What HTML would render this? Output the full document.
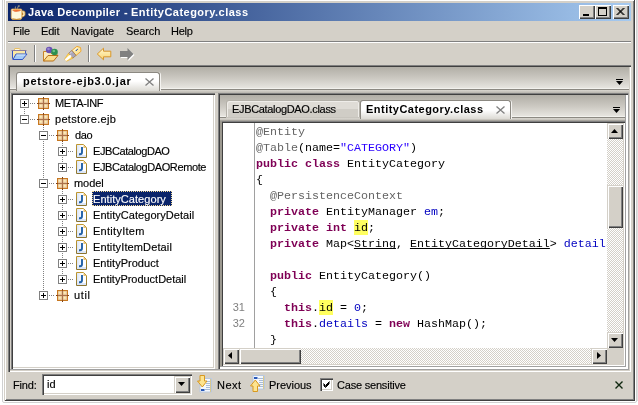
<!DOCTYPE html>
<html><head><meta charset="utf-8"><title>Java Decompiler - EntityCategory.class</title>
<style>
html,body{margin:0;padding:0}
body{width:638px;height:405px;background:#fff;overflow:hidden;position:relative;font:11px/13px 'Liberation Sans',sans-serif;color:#000}
div,svg,i,span{box-sizing:border-box}
.a{position:absolute}
.t{position:absolute;white-space:pre;will-change:transform;-webkit-text-stroke:0.15px;font:11px/13px 'Liberation Sans',sans-serif}
#win{position:absolute;left:4px;top:-1px;width:631px;height:402px;background:#d4d0c8;
 box-shadow:inset 1px 1px 0 #d4d0c8,inset -1px -1px 0 #404040,inset 2px 2px 0 #fff,inset -2px -2px 0 #808080}
#title{position:absolute;left:8px;top:3px;width:623px;height:18px;background:linear-gradient(to right,#0a246a 0%,#a6caf0 100%)}
.tb{position:absolute;top:5px;width:16px;height:14px;background:#d4d0c8;
 box-shadow:inset 1px 1px 0 #fff,inset -1px -1px 0 #404040,inset -2px -2px 0 #808080}
.sunk{box-shadow:inset 1px 1px 0 #808080,inset 2px 2px 0 #404040,inset -1px -1px 0 #fff,inset -2px -2px 0 #d4d0c8}
.pnl{box-shadow:inset 1px 1px 0 #808080,inset 2px 2px 0 #404040,inset -1px -1px 0 #fff,inset -2px -2px 0 #d4d0c8,inset -3px -3px 0 #a0a0a0}
.rpn{box-shadow:inset 1px 1px 0 #808080,inset 2px 2px 0 #404040,inset -1px -1px 0 #fff,inset -2px -2px 0 #fff,inset -3px -3px 0 #a0a0a0}
.sb{box-shadow:inset 1px 1px 0 #d4d0c8,inset 2px 2px 0 #fff,inset -1px -1px 0 #404040,inset -2px -2px 0 #808080 !important}
.eds{box-shadow:inset 0 1px 0 #a8a59e,inset 2px 0 0 #9c9990,inset 0 2px 0 #808080,inset 3px 3px 0 #404040,inset -1px -1px 0 #fff,inset -2px -2px 0 #d4d0c8}
.btn{position:absolute;background:#d4d0c8;box-shadow:inset 1px 1px 0 #fff,inset -1px -1px 0 #404040,inset -2px -2px 0 #808080}
.chk{background-color:#fff;background-image:linear-gradient(45deg,#d4d0c8 25%,transparent 25%,transparent 75%,#d4d0c8 75%),linear-gradient(45deg,#d4d0c8 25%,transparent 25%,transparent 75%,#d4d0c8 75%);background-size:2px 2px;background-position:0 0,1px 1px}
/* tree */
.bx{position:absolute;width:9px;height:9px;border:1px solid #808080;background:#fff}
.bx .h{position:absolute;left:1px;top:3px;width:5px;height:1px;background:#000}
.bx .v{position:absolute;left:3px;top:1px;width:1px;height:5px;background:#000}
.hd{position:absolute;height:1px;background:repeating-linear-gradient(to right,#808080 0,#808080 1px,transparent 1px,transparent 2px)}
.vd{position:absolute;width:1px;background:repeating-linear-gradient(to bottom,#808080 0,#808080 1px,transparent 1px,transparent 2px)}
.ic{position:absolute}
.sel{position:absolute;background:#0a246a;outline:1px dotted #f5db95;outline-offset:-1px}
/* code */
#ed{position:absolute;left:223px;top:123px;width:384px;height:225px;background:#fff;overflow:hidden}
.cl{will-change:transform;position:absolute;left:33px;white-space:pre;font:11.67px/16px 'Liberation Mono',monospace;color:#000}
.ln{will-change:transform;position:absolute;left:0;width:22px;text-align:right;font:11px/13px 'Liberation Sans',sans-serif;color:#808080}
.kw{color:#7f0055;font-weight:bold}
.an{color:#646464}
.st{color:#2a00ff}
.fd{color:#0000c0}
.nm{color:#0000c0}
.lk{text-decoration:underline;text-underline-offset:1px;text-decoration-thickness:1px;text-decoration-skip-ink:none}
.hl{background:#ffff60;padding:1px 0 0 0}
</style></head>
<body>
<svg width="0" height="0" style="position:absolute">
<defs>
<radialGradient id="pg" cx="0.4" cy="0.4" r="0.7"><stop offset="0" stop-color="#fff4b8"/><stop offset="1" stop-color="#ecc8a0"/></radialGradient>
<g id="pkg">
 <rect x="1.5" y="1.5" width="10" height="10" fill="#dcb088" stroke="#c87820"/>
 <rect x="2.300" y="2.300" width="3.400" height="3.400" fill="url(#pg)"/><rect x="7.300" y="2.300" width="3.400" height="3.400" fill="url(#pg)"/>
 <rect x="2.300" y="7.300" width="3.400" height="3.400" fill="url(#pg)"/><rect x="7.300" y="7.300" width="3.400" height="3.400" fill="url(#pg)"/>
 <path d="M6.500 1v11M1 6.500h11" stroke="#8a4a20" stroke-width="1" opacity="0.600"/><path d="M6.500 0v1.500M6.500 11.500v1.500M0 6.500h1.500M11.500 6.500h1.500" stroke="#7a4018" stroke-width="1"/>
</g>
<linearGradient id="cg" x1="0" y1="0" x2="1" y2="0"><stop offset="0" stop-color="#d8e4f8"/><stop offset="0.600" stop-color="#fff"/></linearGradient>
<linearGradient id="cb" x1="0" y1="0" x2="0" y2="1"><stop offset="0" stop-color="#c09830"/><stop offset="1" stop-color="#8a7430"/></linearGradient>
<g id="cls">
 <path d="M0.500 0.500h7l3 3v10h-10z" fill="url(#cg)" stroke="url(#cb)"/>
 <path d="M1 11h9v2h-9z" fill="#dce6f8"/>
 <path d="M7.500 1v3h3z" fill="#e8c070"/>
 <path d="M6 3v5.300q0 2-2 2h-1" fill="none" stroke="#2060a8" stroke-width="1.900"/>
</g>
</defs>
</svg>
<div class="a" style="left:2px;top:-3px;width:635px;height:406px;border:1px solid #d0d0d0;border-radius:2px"></div>
<div class="a" style="left:637px;top:0;width:1px;height:401px;background:#e2e2e2"></div>
<div id="win"></div>
<div id="title"></div>
<!-- title buttons -->
<div class="tb" style="left:579px"><div class="a" style="left:4px;top:9px;width:6px;height:2px;background:#000"></div></div>
<div class="tb" style="left:595px"><div class="a" style="left:3px;top:2px;width:9px;height:9px;border:1px solid #000;border-top-width:2px"></div></div>
<div class="tb" style="left:613px"><svg class="a" style="left:3px;top:3px" width="9" height="7" viewBox="0 0 9 7"><path d="M0.5 0L7.500 7M1.500 0L8.500 7M7.500 0L0.500 7M8.500 0L1.500 7" stroke="#000" stroke-width="1"/></svg></div>

<!-- title icon -->
<svg class="a" style="left:10px;top:4px" width="16" height="16" viewBox="0 0 16 16">
 <path d="M5.500 4.800q-0.600-1.300 0.300-2.300M7.300 4.800q0.200-1.800 2.200-3.500M7.800 1.800l1.800 0.800" stroke="#8c8c84" stroke-width="1.100" fill="none"/>
 <path d="M11.500 7h2q1.500 0 1.500 1.500v2q0 1.500-1.500 2l-2 0.500z" fill="#fff0c8" stroke="#d09838" stroke-width="0.900"/>
 <path d="M12 8.500h1.200v2.500l-1.200 0.400z" fill="#b87820"/>
 <path d="M1.200 6q0-1 1-1h8.600q1 0 1 1v7.500q0 2-2 2h-6.600q-2 0-2-2z" fill="#fff8dc" stroke="#e0a850" stroke-width="0.800"/>
 <path d="M2.300 6q4.500-1.500 9 0q-1 1.800-4.700 1.800t-4.300-1.800z" fill="#ee6a30"/>
 <path d="M3 6q4-1 7.500 0" stroke="#f8b850" stroke-width="0.800" fill="none"/>
 <path d="M2.500 14.800q4 1.200 8 0" stroke="#c88828" stroke-width="1" fill="none"/>
</svg>
<!-- toolbar: open -->
<svg class="a" style="left:11px;top:47px" width="17" height="14" viewBox="0 0 17 14">
 <path d="M3.500 3.500v-1.500q0-0.500 0.500-0.500h4.500q0.500 0 0.500 0.500v1.500" fill="#fff8e0" stroke="#e8c068" stroke-width="1"/>
 <path d="M1 3.500h13.500v4h-13.500z" fill="#fbe28e"/>
 <path d="M1.500 4v8h2l2-5h8.500v-3" fill="#fde9a4"/>
 <path d="M0.500 3.500h15" stroke="#8c7c9c" stroke-width="1"/>
 <path d="M1.500 4v7.500q0 1 1 1h9" fill="none" stroke="#3454c4" stroke-width="1"/>
 <path d="M14.500 4v2.500" stroke="#4060c0" stroke-width="1"/>
 <path d="M5 7h11l-4.500 5.500h-9.500z" fill="#a6ccf6" stroke="#3454c4" stroke-width="1"/>
 <path d="M5.500 8h9" stroke="#d4e8fc" stroke-width="1"/>
</svg>
<!-- toolbar: open type -->
<svg class="a" style="left:43px;top:46px" width="16" height="16" viewBox="0 0 16 16">
 <path d="M0.500 5.500v9.500h1l4-5.500h8.500v-2h-6l-1.500-2z" fill="#fcecc0" stroke="#c88428" stroke-width="1"/>
 <path d="M5 9.500h10l-4.500 5.500h-10z" fill="#fbdc8c" stroke="#b87018" stroke-width="1"/>
 <circle cx="6.200" cy="4" r="3.300" fill="#6a52b4"/>
 <circle cx="5.500" cy="3" r="1.300" fill="#9a88d0"/>
 <circle cx="11.500" cy="6" r="3.300" fill="#2c9050"/>
 <circle cx="10.800" cy="5" r="1.300" fill="#6cc088"/>
</svg>
<!-- toolbar: highlighter -->
<svg class="a" style="left:64px;top:46px" width="18" height="16" viewBox="0 0 18 16">
 <path d="M7.920 4.500L12.020 9.420L17.030 5.260L16.500 1.500L12.930 0.340z" fill="#fbe6a0" stroke="#f0a428" stroke-width="0.900" stroke-linejoin="round"/>
 <path d="M9.500 5L13.500 1.800" stroke="#fff6d0" stroke-width="1.400"/>
 <circle cx="12.300" cy="4.400" r="0.650" fill="#2048b0"/><circle cx="13.300" cy="3.300" r="0.650" fill="#2048b0"/>
 <path d="M4.450 7.380L8.550 12.300L12.020 9.420L7.920 4.500z" fill="#aaa6ba" stroke="#9a7a50" stroke-width="0.800" stroke-linejoin="round"/>
 <path d="M5.800 7.500L8 5.800" stroke="#c8c4d4" stroke-width="1.200"/>
 <path d="M0.730 13.080L2.460 15.160L8.550 12.300L4.450 7.380z" fill="#fde070" stroke="#f0b030" stroke-width="0.800" stroke-linejoin="round"/>
 <path d="M2.200 13.600L6.200 10.300" stroke="#fff" stroke-width="2.400" stroke-linecap="round"/>
</svg>
<!-- toolbar: back -->
<svg class="a" style="left:96px;top:47px" width="16" height="14" viewBox="0 0 16 14">
 <defs><linearGradient id="ag" x1="0" y1="0" x2="0" y2="1"><stop offset="0" stop-color="#fff6d0"/><stop offset="0.500" stop-color="#fde7a0"/><stop offset="1" stop-color="#f8d070"/></linearGradient></defs>
 <path d="M1.300 7l6.200-5.800v3h7.300v5.600h-7.300v3z" fill="url(#ag)" stroke="#d8962a" stroke-width="1" stroke-linejoin="round"/>
</svg>
<!-- toolbar: forward (disabled) -->
<svg class="a" style="left:119px;top:47px" width="17" height="15" viewBox="0 0 17 15">
 <path d="M15.500 8l-6-6v3h-7.500v6h7.500v3z" fill="#fff"/>
 <path d="M14.500 7l-6-6v3h-7.500v6h7.500v3z" fill="#808080"/>
</svg>
<!-- find next icon -->
<svg class="a" style="left:197px;top:375px" width="16" height="18" viewBox="0 0 16 18">
 <path d="M3 3.500h11.500v13.500h-11.500z" fill="#f4f8fe" stroke="#b8c8e0" stroke-width="1"/>
 <path d="M13.500 4v13" stroke="#d8c890" stroke-width="1"/>
 <path d="M9 6.500h4M9 8.500h4M9 10.500h4M9 12.500h4M8 14.500h5" stroke="#a8bcd8" stroke-width="1"/>
 <rect x="4" y="14" width="3.500" height="2" fill="#2858b8"/>
 <path d="M3 0.500h4.500v5.500h2.500l-4.700 6-4.800-6h2.500z" fill="#fde490" stroke="#d89820" stroke-width="1" stroke-linejoin="round"/>
</svg>
<!-- find prev icon -->
<svg class="a" style="left:250px;top:375px" width="16" height="18" viewBox="0 0 16 18">
 <path d="M3 0.500h11.500v13.500h-11.500z" fill="#f4f8fe" stroke="#b8c8e0" stroke-width="1"/>
 <path d="M13.500 1v13" stroke="#d8c890" stroke-width="1"/>
 <path d="M8 3.500h5M9 5.500h4M9 7.500h4M9 9.500h4M9 11.500h4" stroke="#a8bcd8" stroke-width="1"/>
 <rect x="4" y="2" width="3.500" height="2" fill="#2858b8"/>
 <path d="M3 16.500h4.500v-5.500h2.500l-4.700-6-4.800 6h2.500z" fill="#fde490" stroke="#d89820" stroke-width="1" stroke-linejoin="round"/>
</svg>
<!-- menu sep -->
<div class="a" style="left:8px;top:41px;width:623px;height:1px;background:#808080"></div>
<div class="a" style="left:8px;top:42px;width:623px;height:1px;background:#fff"></div>
<!-- toolbar sep -->
<div class="a" style="left:34px;top:45px;width:1px;height:17px;background:#808080"></div>
<div class="a" style="left:35px;top:45px;width:1px;height:17px;background:#fff"></div>
<div class="a" style="left:88px;top:45px;width:1px;height:17px;background:#808080"></div>
<div class="a" style="left:89px;top:45px;width:1px;height:17px;background:#fff"></div>

<!-- outer panel -->
<div class="a pnl" style="left:8px;top:65px;width:623px;height:307px;background:#d4d0c8"></div>
<div class="a" style="left:10px;top:67px;width:619px;height:22px;background:linear-gradient(to bottom,#b1aea6 0%,#cbc8c1 50%,#e9e7e2 100%)"></div>
<div class="a" style="left:10px;top:88px;width:619px;height:1px;background:#f2f1ed"></div>
<div class="a" style="left:10px;top:89px;width:619px;height:1px;background:#8c8982"></div>
<div class="a" style="left:10px;top:90px;width:619px;height:3px;background:linear-gradient(to bottom,#dad7d0,#b8b5ae)"></div>
<!-- outer tab -->
<div class="a" style="left:16px;top:72px;width:144px;height:19px;border:1px solid #8c8982;border-bottom:none;border-radius:3px 3px 0 0;background:linear-gradient(to bottom,#fff 0%,#fff 45%,#dcdad4 100%);box-shadow:1px 0 0 #f4f3f0"></div>
<svg class="a" style="left:145px;top:78px" width="9" height="8" viewBox="0 0 9 8"><path d="M0.5 0.500L8.500 7.500M8.500 0.500L0.500 7.500" stroke="#808080" stroke-width="1.300"/></svg>
<!-- outer dropdown -->
<div class="a" style="left:616px;top:79px;width:7px;height:1px;background:#000"></div>
<svg class="a" style="left:616px;top:81px" width="7" height="4" viewBox="0 0 7 4"><path d="M0 0h7L3.500 4z" fill="#000"/></svg>

<!-- left tree -->
<div class="a sunk" style="left:11px;top:93px;width:204px;height:276px;background:#fff"></div>
<div class="bx" style="left:20px;top:99px"><i class="h"></i><i class="v"></i></div>
<div class="hd" style="left:30px;top:103px;width:5px"></div>
<svg class="ic" style="left:37px;top:97px" width="13" height="13" viewBox="0 0 13 13"><use href="#pkg"/></svg>
<div class="bx" style="left:20px;top:115px"><i class="h"></i></div>
<div class="hd" style="left:30px;top:119px;width:5px"></div>
<svg class="ic" style="left:37px;top:113px" width="13" height="13" viewBox="0 0 13 13"><use href="#pkg"/></svg>
<div class="bx" style="left:39px;top:131px"><i class="h"></i></div>
<div class="hd" style="left:49px;top:135px;width:5px"></div>
<svg class="ic" style="left:56px;top:129px" width="13" height="13" viewBox="0 0 13 13"><use href="#pkg"/></svg>
<div class="bx" style="left:58px;top:147px"><i class="h"></i><i class="v"></i></div>
<div class="hd" style="left:68px;top:151px;width:5px"></div>
<svg class="ic" style="left:76px;top:144px" width="11" height="14" viewBox="0 0 11 14"><use href="#cls"/></svg>
<div class="bx" style="left:58px;top:163px"><i class="h"></i><i class="v"></i></div>
<div class="hd" style="left:68px;top:167px;width:5px"></div>
<svg class="ic" style="left:76px;top:160px" width="11" height="14" viewBox="0 0 11 14"><use href="#cls"/></svg>
<div class="bx" style="left:39px;top:179px"><i class="h"></i></div>
<div class="hd" style="left:49px;top:183px;width:5px"></div>
<svg class="ic" style="left:56px;top:177px" width="13" height="13" viewBox="0 0 13 13"><use href="#pkg"/></svg>
<div class="bx" style="left:58px;top:195px"><i class="h"></i><i class="v"></i></div>
<div class="hd" style="left:68px;top:199px;width:5px"></div>
<svg class="ic" style="left:76px;top:192px" width="11" height="14" viewBox="0 0 11 14"><use href="#cls"/></svg>
<div class="sel" style="left:92px;top:191px;width:80px;height:15px"></div>
<div class="bx" style="left:58px;top:211px"><i class="h"></i><i class="v"></i></div>
<div class="hd" style="left:68px;top:215px;width:5px"></div>
<svg class="ic" style="left:76px;top:208px" width="11" height="14" viewBox="0 0 11 14"><use href="#cls"/></svg>
<div class="bx" style="left:58px;top:227px"><i class="h"></i><i class="v"></i></div>
<div class="hd" style="left:68px;top:231px;width:5px"></div>
<svg class="ic" style="left:76px;top:224px" width="11" height="14" viewBox="0 0 11 14"><use href="#cls"/></svg>
<div class="bx" style="left:58px;top:243px"><i class="h"></i><i class="v"></i></div>
<div class="hd" style="left:68px;top:247px;width:5px"></div>
<svg class="ic" style="left:76px;top:240px" width="11" height="14" viewBox="0 0 11 14"><use href="#cls"/></svg>
<div class="bx" style="left:58px;top:259px"><i class="h"></i><i class="v"></i></div>
<div class="hd" style="left:68px;top:263px;width:5px"></div>
<svg class="ic" style="left:76px;top:256px" width="11" height="14" viewBox="0 0 11 14"><use href="#cls"/></svg>
<div class="bx" style="left:58px;top:275px"><i class="h"></i><i class="v"></i></div>
<div class="hd" style="left:68px;top:279px;width:5px"></div>
<svg class="ic" style="left:76px;top:272px" width="11" height="14" viewBox="0 0 11 14"><use href="#cls"/></svg>
<div class="bx" style="left:39px;top:291px"><i class="h"></i><i class="v"></i></div>
<div class="hd" style="left:49px;top:295px;width:5px"></div>
<svg class="ic" style="left:56px;top:289px" width="13" height="13" viewBox="0 0 13 13"><use href="#pkg"/></svg>
<div class="vd" style="left:24px;top:109px;height:6px"></div>
<div class="vd" style="left:43px;top:127px;height:4px"></div>
<div class="vd" style="left:43px;top:141px;height:38px"></div>
<div class="vd" style="left:43px;top:189px;height:102px"></div>
<div class="vd" style="left:62px;top:143px;height:4px"></div>
<div class="vd" style="left:62px;top:157px;height:6px"></div>
<div class="vd" style="left:62px;top:191px;height:4px"></div>
<div class="vd" style="left:62px;top:205px;height:6px"></div>
<div class="vd" style="left:62px;top:221px;height:6px"></div>
<div class="vd" style="left:62px;top:237px;height:6px"></div>
<div class="vd" style="left:62px;top:253px;height:6px"></div>
<div class="vd" style="left:62px;top:269px;height:6px"></div>

<!-- right panel -->
<div class="a rpn" style="left:218px;top:93px;width:410px;height:276px;background:#d4d0c8"></div>
<div class="a" style="left:220px;top:95px;width:405px;height:22px;background:linear-gradient(to bottom,#b1aea6 0%,#cbc8c1 50%,#e9e7e2 100%)"></div>
<div class="a" style="left:220px;top:117px;width:405px;height:1px;background:#8c8982"></div>
<div class="a" style="left:220px;top:118px;width:405px;height:3px;background:linear-gradient(to bottom,#dad7d0,#b8b5ae)"></div>
<!-- inactive tab -->
<div class="a" style="left:220px;top:116px;width:405px;height:1px;background:#f2f1ed"></div>
<div class="a" style="left:226px;top:100px;width:134px;height:17px;border:1px solid #b4b1a9;border-bottom:none;border-radius:3px 3px 0 0;background:linear-gradient(to bottom,#dfdcd6 0%,#dfdcd6 47%,#d0cdc6 47%,#d0cdc6 100%);box-shadow:inset 1px 1px 0 #efede9,inset -1px 0 0 #efede9"></div>
<div class="a" style="left:226px;top:117px;width:134px;height:1px;background:#c8c5be"></div>
<!-- active tab -->
<div class="a" style="left:360px;top:100px;width:151px;height:19px;border:1px solid #8c8982;border-bottom:none;border-radius:3px 3px 0 0;background:linear-gradient(to bottom,#fff 0%,#fff 50%,#dcdad4 100%);box-shadow:1px 0 0 #f4f3f0"></div>
<svg class="a" style="left:496px;top:106px" width="9" height="8" viewBox="0 0 9 8"><path d="M0.5 0.500L8.500 7.500M8.500 0.500L0.500 7.500" stroke="#808080" stroke-width="1.300"/></svg>
<div class="a" style="left:613px;top:107px;width:7px;height:1px;background:#000"></div>
<svg class="a" style="left:613px;top:109px" width="7" height="4" viewBox="0 0 7 4"><path d="M0 0h7L3.500 4z" fill="#000"/></svg>
<!-- editor -->
<div class="a eds" style="left:220px;top:120px;width:405px;height:246px;background:#fff"></div>
<div id="ed">
<div class="a" style="left:31px;top:0;width:1px;height:225px;background:#a0a0a0"></div>
<div class="cl" style="top:1px"><span class="an">@Entity</span></div>
<div class="cl" style="top:17px"><span class="an">@Table</span>(name=<span class="st">&quot;CATEGORY&quot;</span>)</div>
<div class="cl" style="top:33px"><span class="kw">public class</span> EntityCategory</div>
<div class="cl" style="top:49px">{</div>
<div class="cl" style="top:65px">  <span class="an">@PersistenceContext</span></div>
<div class="cl" style="top:81px">  <span class="kw">private</span> EntityManager <span class="fd">em</span>;</div>
<div class="cl" style="top:97px">  <span class="kw">private int</span> <span class="hl">id</span>;</div>
<div class="cl" style="top:113px">  <span class="kw">private</span> Map&lt;<span class="lk">String</span>, <span class="lk">EntityCategoryDetail</span>&gt; <span class="fd">details</span>;</div>
<div class="cl" style="top:129px"></div>
<div class="cl" style="top:145px">  <span class="kw">public</span> EntityCategory()</div>
<div class="cl" style="top:161px">  {</div>
<div class="cl" style="top:177px">    <span class="kw">this</span>.<span class="hl">id</span> = <span class="nm">0</span>;</div>
<div class="ln" style="top:178px">31</div>
<div class="cl" style="top:193px">    <span class="kw">this</span>.<span class="fd">details</span> = <span class="kw">new</span> HashMap();</div>
<div class="ln" style="top:194px">32</div>
<div class="cl" style="top:209px">  }</div>
<div class="cl" style="top:225px"></div>
</div>
<!-- vscroll -->
<div class="a chk" style="left:607px;top:123px;width:16px;height:225px"></div>
<div class="btn sb" style="left:607px;top:123px;width:16px;height:16px"><svg class="a" style="left:4px;top:6px" width="7" height="4" viewBox="0 0 7 4"><path d="M0 4h7L3.500 0z" fill="#000"/></svg></div>
<div class="btn sb" style="left:607px;top:185px;width:16px;height:43px"></div>
<div class="btn sb" style="left:607px;top:332px;width:16px;height:16px"><svg class="a" style="left:4px;top:6px" width="7" height="4" viewBox="0 0 7 4"><path d="M0 0h7L3.500 4z" fill="#000"/></svg></div>
<!-- hscroll -->
<div class="a chk" style="left:223px;top:348px;width:384px;height:16px"></div>
<div class="btn sb" style="left:223px;top:348px;width:16px;height:16px"><svg class="a" style="left:5px;top:4px" width="4" height="7" viewBox="0 0 4 7"><path d="M4 0v7L0 3.500z" fill="#000"/></svg></div>
<div class="btn sb" style="left:239px;top:348px;width:62px;height:16px"></div>
<div class="btn sb" style="left:591px;top:348px;width:16px;height:16px"><svg class="a" style="left:6px;top:4px" width="4" height="7" viewBox="0 0 4 7"><path d="M0 0v7L4 3.500z" fill="#000"/></svg></div>
<div class="a" style="left:607px;top:348px;width:16px;height:16px;background:#d4d0c8"></div>

<!-- find bar -->
<div class="a sunk" style="left:42px;top:374px;width:150px;height:21px;background:#fff"></div>
<div class="btn sb" style="left:174px;top:376px;width:16px;height:17px"><svg class="a" style="left:4px;top:6px" width="7" height="4" viewBox="0 0 7 4"><path d="M0 0h7L3.500 4z" fill="#000"/></svg></div>
<div class="a sunk" style="left:320px;top:378px;width:13px;height:13px;background:#fff"></div>
<svg class="a" style="left:323px;top:381px" width="7" height="7" viewBox="0 0 7 7"><path d="M0.5 2.500L2.500 4.500L6.500 0.500M0.500 3.500L2.500 5.500L6.500 1.500M0.500 4.500L2.500 6.500L6.500 2.500" stroke="#000" fill="none" stroke-width="1"/></svg>
<svg class="a" style="left:615px;top:381px" width="8" height="8" viewBox="0 0 8 8"><path d="M0.5 0.500L7.500 7.500M7.500 0.500L0.500 7.500" stroke="#102810" stroke-width="1.400"/></svg>

<div class="t" style="left:28.0px;top:6px;letter-spacing:0.321px;color:#fff;font-weight:bold;-webkit-text-stroke:0;">Java Decompiler</div>
<div class="t" style="left:124.0px;top:6px;color:#fff;font-weight:bold;-webkit-text-stroke:0;">-</div>
<div class="t" style="left:131.0px;top:6px;letter-spacing:0.474px;color:#fff;font-weight:bold;-webkit-text-stroke:0;">EntityCategory.class</div>
<div class="t" style="left:12.7px;top:25px;letter-spacing:-0.233px;color:#000;">File</div>
<div class="t" style="left:40.5px;top:25px;letter-spacing:-0.167px;color:#000;">Edit</div>
<div class="t" style="left:71.0px;top:25px;letter-spacing:-0.029px;color:#000;">Navigate</div>
<div class="t" style="left:125.5px;top:25px;letter-spacing:-0.100px;color:#000;">Search</div>
<div class="t" style="left:170.7px;top:25px;letter-spacing:-0.233px;color:#000;">Help</div>
<div class="t" style="left:23.0px;top:75px;letter-spacing:0.722px;color:#000;font-weight:bold;-webkit-text-stroke:0;">petstore-ejb3.0.jar</div>
<div class="t" style="left:232.4px;top:103px;letter-spacing:-0.333px;color:#000;">EJBCatalogDAO.class</div>
<div class="t" style="left:365.5px;top:103px;letter-spacing:0.474px;color:#000;font-weight:bold;-webkit-text-stroke:0;">EntityCategory.class</div>
<div class="t" style="left:12.8px;top:379px;letter-spacing:-0.150px;color:#000;">Find:</div>
<div class="t" style="left:46.6px;top:378px;color:#000;">id</div>
<div class="t" style="left:216.6px;top:379px;letter-spacing:0.467px;color:#000;">Next</div>
<div class="t" style="left:269.4px;top:379px;letter-spacing:-0.029px;color:#000;">Previous</div>
<div class="t" style="left:337.2px;top:379px;letter-spacing:-0.200px;color:#000;">Case sensitive</div>
<div class="t" style="left:55.0px;top:97px;letter-spacing:-0.371px;color:#000;">META-INF</div>
<div class="t" style="left:55.0px;top:113px;letter-spacing:0.309px;color:#000;">petstore.ejb</div>
<div class="t" style="left:75.0px;top:129px;letter-spacing:-0.350px;color:#000;">dao</div>
<div class="t" style="left:93.0px;top:145px;letter-spacing:-0.417px;color:#000;">EJBCatalogDAO</div>
<div class="t" style="left:93.0px;top:161px;letter-spacing:-0.389px;color:#000;">EJBCatalogDAORemote</div>
<div class="t" style="left:74.0px;top:177px;letter-spacing:-0.075px;color:#000;">model</div>
<div class="t" style="left:93.0px;top:193px;letter-spacing:0.054px;color:#fff;">EntityCategory</div>
<div class="t" style="left:93.0px;top:209px;letter-spacing:0.047px;color:#000;">EntityCategoryDetail</div>
<div class="t" style="left:93.0px;top:225px;letter-spacing:0.278px;color:#000;">EntityItem</div>
<div class="t" style="left:93.0px;top:241px;letter-spacing:0.120px;color:#000;">EntityItemDetail</div>
<div class="t" style="left:93.0px;top:257px;letter-spacing:0.025px;color:#000;">EntityProduct</div>
<div class="t" style="left:93.0px;top:273px;letter-spacing:-0.022px;color:#000;">EntityProductDetail</div>
<div class="t" style="left:74.0px;top:289px;letter-spacing:0.633px;color:#000;">util</div>
</body></html>
